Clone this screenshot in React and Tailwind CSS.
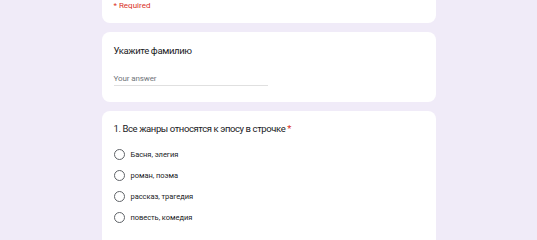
export default function App() {
  const options = ['Басня, элегия', 'роман, поэма', 'рассказ, трагедия', 'повесть, комедия']

  return (
    <div className="min-h-screen w-[537px] h-[240px] overflow-hidden bg-[#f0ebf8] font-['Roboto',sans-serif] text-[#202124]">
      <div className="mx-auto w-[334px] flex flex-col gap-[9px]">

        {/* REQUIRED CARD */}
        <div className="bg-white rounded-b-lg px-3 pb-[11px]">
          <p className="text-[8px] leading-[12px] text-[#d93025]">* Required</p>
        </div>

        {/* LAST NAME */}
        <div className="bg-white rounded-lg px-3 pt-[12px] h-[70px]">
          <p className="text-[9.5px] leading-[13px] tracking-[-0.35px]">Укажите фамилию</p>
          <div className="mt-[16px] w-[154px] border-b border-[#e0e0e0] pb-[1px]">
            <p className="text-[8px] leading-[11px] text-[#70757a] tracking-[-0.1px]">Your answer</p>
          </div>
        </div>

        {/* QUESTION */}
        <div className="bg-white rounded-lg px-3 pt-[11px] pb-8">
          <p className="text-[9.5px] leading-[13px] tracking-[-0.4px]">
            1. Все жанры относятся к эпосу в строчке <span className="text-[#d93025]">*</span>
          </p>
          <div className="mt-[14px] flex flex-col gap-[10px]">
            {options.map((o) => (
              <div key={o} className="flex items-center gap-[6px]">
                <div className="w-[11px] h-[11px] rounded-full border-[1.5px] border-[#5f6368]" />
                <span className="text-[7.5px] leading-[11px] tracking-[-0.05px]">{o}</span>
              </div>
            ))}
          </div>
        </div>

      </div>
    </div>
  )
}
